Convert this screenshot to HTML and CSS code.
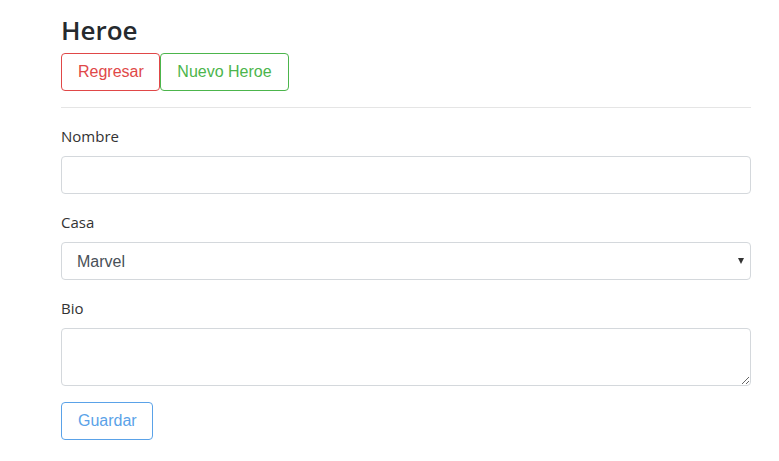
FILE: index.html
```html
<!DOCTYPE html>
<html lang="es">
<head>
<meta charset="utf-8">
<title>Heroe</title>
<link rel="stylesheet" href="styles.css">
</head>
<body>
<div class="container">
  <h3 class="title">Heroe</h3>
  <div class="actions">
    <button class="btn btn-red" type="button">Regresar</button>
    <button class="btn btn-green" type="button">Nuevo Heroe</button>
  </div>
  <hr class="divider">
  <form class="form">
    <div class="group">
      <label class="label">Nombre</label>
      <input class="control" type="text">
    </div>
    <div class="group">
      <label class="label">Casa</label>
      <div class="select-wrap">
        <select class="control select">
          <option>Marvel</option>
          <option>DC</option>
        </select>
        <span class="caret"></span>
      </div>
    </div>
    <div class="group">
      <label class="label">Bio</label>
      <textarea class="control area"></textarea>
    </div>
    <button class="btn btn-blue" type="button">Guardar</button>
  </form>
</div>
</body>
</html>
```
FILE: styles.css
```css
* { box-sizing: border-box; }
html, body { margin: 0; padding: 0; background: #fff; }
body {
  font-family: "Open Sans", "Noto Sans", sans-serif;
  font-size: 15px;
  color: #212529;
}
.container {
  width: 690px;
  margin-left: 61px;
  padding-top: 13px;
}
.title {
  margin: 0 0 7px 0;
  font-size: 26px;
  font-weight: 600;
  line-height: 34px;
  height: 33px;
  color: #262a2e;
}
.actions { display: flex; }
.btn {
  font-family: "Liberation Sans", Arial, sans-serif;
  font-size: 16px;
  height: 38px;
  padding: 0 16px;
  background: #fff;
  border: 1px solid;
  border-radius: 4px;
  line-height: 36px;
}
.btn-red { color: #e04848; border-color: #e04848; width: 99px; }
.btn-green { color: #4cb54c; border-color: #4cb54c; width: 129px; }
.btn-blue { color: #5aa2e8; border-color: #5aa2e8; width: 92px; }
.divider {
  margin: 16px 0;
  border: 0;
  border-top: 1px solid #e5e5e5;
}
.group { margin-bottom: 16px; }
.label {
  display: block;
  line-height: 24px;
  margin-bottom: 8px;
  color: #333;
}
.control {
  display: block;
  width: 100%;
  height: 38px;
  border: 1px solid #d4d8dc;
  border-radius: 4px;
  background: #fff;
  font-family: "Liberation Sans", Arial, sans-serif;
  font-size: 16px;
  color: #495057;
  padding: 0 15px;
}
.select-wrap { position: relative; }
.select {
  appearance: none;
  -webkit-appearance: none;
}
.caret {
  position: absolute;
  right: 7px;
  top: 16px;
  width: 0;
  height: 0;
  border-left: 3.5px solid transparent;
  border-right: 3.5px solid transparent;
  border-top: 6px solid #333;
}
.area { height: 58px; resize: vertical; padding: 6px 12px; }
```
